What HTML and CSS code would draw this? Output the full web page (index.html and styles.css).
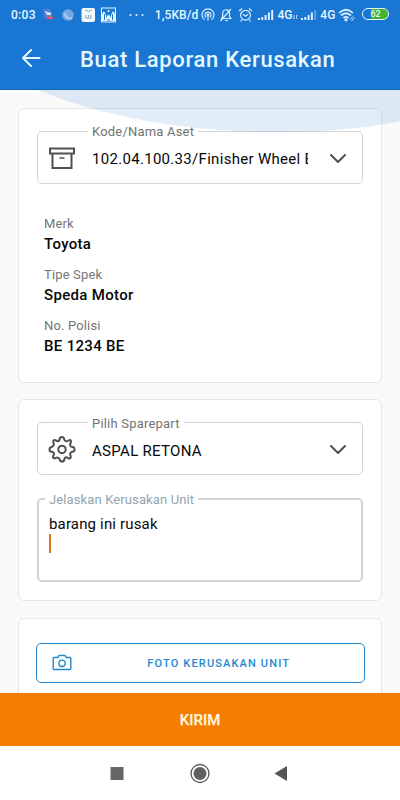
FILE: index.html
```html
<!DOCTYPE html>
<html lang="id">
<head>
<meta charset="utf-8">
<meta name="viewport" content="width=device-width, initial-scale=1">
<title>Buat Laporan Kerusakan</title>
<link rel="stylesheet" href="styles.css">
</head>
<body>
<div class="screen">
  <header class="top">
    <div class="status">
      <span class="clock">0:03</span>
      <svg class="apps" width="112" height="18" viewBox="0 0 112 18">
        <path d="M3 3h6l3 4v5H4z" fill="#527fd5"/><path d="M5 13l7-4 1 4z" fill="#e45b68"/><path d="M5 6h2v3M8 6v3l1-2 1 2V6" stroke="#fff" fill="none"/>
        <circle cx="28" cy="9" r="5.800" fill="#75a9e2"/><path d="M25 7a5 5 0 0 0 7 5" stroke="#a8c9ed" stroke-width="2" fill="none"/>
        <rect x="41.500" y="2" width="13.500" height="14" rx="2" fill="#f4fbff"/><path d="M45 4q3.500 3 7 0M46 9v3h5V9M48.500 9v2" stroke="#7ea4c4" fill="none"/>
        <rect x="61.500" y="2" width="14" height="14" fill="#1976d2" stroke="#e8f7ff"/><path d="M62 15V8l2-3 2 4v4q0-3 2.500-4.500Q71 10 71 13V9l2-4 2 3v7z" fill="#e8f7ff"/><path d="M64.500 14V8M72.500 14V8M67 14h3" stroke="#1976d2"/><circle cx="68.500" cy="5" r="1" fill="#fff"/>
        <g fill="#d9efff"><circle cx="90.500" cy="9" r="1.100"/><circle cx="96.500" cy="9" r="1.100"/><circle cx="102.500" cy="9" r="1.100"/></g>
      </svg>
      <span class="speed">1,5KB/d</span>
      <svg class="alerts" width="52" height="18" viewBox="0 0 52 18" fill="none" stroke="#d9efff" stroke-width="1.200">
        <path d="M4.500 13.700a6 6 0 1 1 7 0M6 11.300a3 3 0 1 1 4 0M8 9.500v5"/><circle cx="8" cy="9" r=".8" fill="#d9efff"/>
        <path d="M21.500 12.500h9.500l-1.500-2V7a3.500 3.500 0 0 0-6.500-1.500L22.500 11zM25 14.500h3M31 3L20.500 15"/>
        <circle cx="45.500" cy="9.200" r="4.900"/><path d="M43 8.200l2.500 2 2.500-2M39 5l3-2.500M49 2.500L52 5M42 13.500l-1.500 2M49 13.500l1.500 2"/>
      </svg>
      <svg class="bars" width="16" height="12" viewBox="0 0 16 12" fill="#d9efff"><path d="M0 9h2v2H0zM3.300 8h2v3h-2zM6.600 6h2v5h-2zM9.900 3.500h2V11h-2zM13.200 1h2v10h-2z"/></svg>
      <span class="net">4G</span>
      <svg class="arrows" width="5" height="6" viewBox="0 0 5 6" stroke="#a9d1f5" fill="none"><path d="M1 1v4M3.500 1v4M0 4l1 1M3.500 1l1 1"/></svg>
      <svg class="bars second" width="16" height="12" viewBox="0 0 16 12" fill="#d9efff"><path d="M0 9h2v2H0zM3.300 8h2v3h-2zM6.600 6h2v5h-2zM9.900 3.500h2V11h-2z"/><path d="M13.200 1h2v10h-2z" opacity=".35"/></svg>
      <span class="net">4G</span>
      <svg class="wifi" width="18" height="14" viewBox="0 0 18 14" fill="none" stroke="#d9efff" stroke-width="1.700"><path d="M1 5q7-6.500 14 0M3 7.500q5-4.500 10 0M5.500 10q2.500-2.200 5 0"/><circle cx="8" cy="11.800" r=".8" fill="#d9efff"/><path d="M12 11.500l3-3M13.500 13l3-3.500" stroke-width="1"/></svg>
      <span class="battery">62</span>
    </div>
    <div class="appbar">
      <svg width="20" height="20" viewBox="0 0 20 20" fill="none" stroke="#e5f7ff" stroke-width="2" stroke-linecap="round" stroke-linejoin="round"><path d="M18.500 9H2M10 1L2 9l8 8"/></svg>
      <h1>Buat Laporan Kerusakan</h1>
    </div>
  </header>
  <main class="content">
    <svg class="curve" width="400" height="44" viewBox="0 90 400 44"><path d="M38 90C100 116 185 132 275 132C320 132 362 129 400 121.500V90z" fill="#1976d2" fill-opacity=".13"/></svg>
    <section class="card asset">
      <div class="field">
        <span class="label">Kode/Nama Aset</span>
        <svg class="lead" width="28" height="28" viewBox="0 0 28 28" fill="none" stroke="#505050" stroke-width="2"><path d="M2 4.500h24v5H2zM4.500 10v14h19V10"/><path d="M11.500 14h5" stroke-width="1.500"/></svg>
        <span class="value code">102.04.100.33/Finisher Wheel B</span>
        <svg class="chevron" width="18" height="12" viewBox="0 0 18 12" fill="none" stroke="#505050" stroke-width="2" stroke-linecap="round" stroke-linejoin="round"><path d="M2 2l7 7 7-7"/></svg>
      </div>
      <dl class="details">
        <dt>Merk</dt><dd>Toyota</dd>
        <dt>Tipe Spek</dt><dd>Speda Motor</dd>
        <dt>No. Polisi</dt><dd>BE 1234 BE</dd>
      </dl>
    </section>
    <section class="card damage">
      <div class="field">
        <span class="label">Pilih Sparepart</span>
        <svg class="lead" width="28" height="28" viewBox="0 0 28 28" fill="none" stroke="#505050" stroke-width="2" stroke-linejoin="round"><path d="M14 2C16 2 16 3.500 16.500 5S19 6.500 20.500 5.500S23 5 23 6.500S22 8.500 22 9.500S23 12 24.500 12S26.500 13 26.500 14.400S26 16.500 24.500 16.700S21.500 18.500 22.300 20S23 23.500 21.500 23.500S19.500 22.300 18.500 22.300S16.500 23 16.300 24.500S15.500 26.500 14 26.500S12 26 11.700 24.500S9.500 22 8 22.800S5 23.500 5 22S6 20 6 19S5 16.700 3.500 16.700S1.500 15.900 1.500 14.400S2 12.300 3.500 12S6.500 10 5.700 8.500S5 5 6.500 5S8.500 6.200 9.500 6.200S11.500 5.500 11.700 4S12.500 2 14 2z"/><circle cx="14" cy="14.400" r="3.700"/></svg>
        <span class="value">ASPAL RETONA</span>
        <svg class="chevron" width="18" height="12" viewBox="0 0 18 12" fill="none" stroke="#505050" stroke-width="2" stroke-linecap="round" stroke-linejoin="round"><path d="M2 2l7 7 7-7"/></svg>
      </div>
      <div class="note">
        <span class="label">Jelaskan Kerusakan Unit</span>
        <p>barang ini rusak</p>
        <div class="caret"></div>
      </div>
    </section>
    <section class="card photo">
      <div class="photo-button">
        <svg width="20" height="18" viewBox="0 0 20 18" fill="none" stroke="#2588cf" stroke-width="1.400" stroke-linejoin="round"><path d="M2.200 3.500h3.500L7 1.500h6l1.300 2h3.500q1 0 1 1v10q0 1-1 1H2.200q-1 0-1-1v-10q0-1 1-1z"/><circle cx="10" cy="9.300" r="3.200"/></svg>
        <span>FOTO KERUSAKAN UNIT</span>
      </div>
    </section>
  </main>
  <div class="submit">KIRIM</div>
  <nav class="nav">
    <svg width="200" height="24" viewBox="0 0 200 24"><path d="M10.500 6h13v13h-13z" fill="#666"/><circle cx="100" cy="12.500" r="9" fill="none" stroke="#555" stroke-width="1.300"/><circle cx="100" cy="12.500" r="6.500" fill="#606060"/><path d="M174.500 12.500L187 5v15z" fill="#555"/></svg>
  </nav>
</div>
</body>
</html>
```
FILE: styles.css
```css
* { box-sizing: border-box; }
body { margin: 0; font-family: Roboto, sans-serif; color: #080808; background: #fafafa; }
svg { display: block; flex: none; }
.screen { width: 400px; height: 800px; display: flex; flex-direction: column; overflow: hidden; }
.top { height: 90px; flex: none; background: #1976d2; color: #e5f7ff; border-bottom: 1px solid #1268b9; }
.status { height: 29px; display: flex; align-items: center; padding: 0 11px; font-size: 12px; font-weight: 500; white-space: nowrap; }
.clock { width: 30px; letter-spacing: .3px; }
.apps { margin-left: -1px; }
.speed { width: 46px; margin-left: 3px; font-size: 12px; letter-spacing: .1px; }
.alerts { margin-left: 0; }
.bars { margin-left: 6px; }
.net { width: 16px; margin-left: 3px; font-size: 12px; }
.arrows { margin: 5px 0 0; }
.bars.second { margin-left: 3px; }
.wifi { margin-left: 2px; }
.battery { width: 27px; height: 12px; margin: -1px 0 0 6px; border: 1.5px solid #e0f4ff; border-radius: 6px; background: linear-gradient(90deg, #1976d2 30%, #42b52c 30%); font-size: 9px; line-height: 10px; text-align: center; }
.appbar { height: 60px; display: flex; align-items: center; gap: 39px; padding-left: 21px; }
h1 { margin: 2px 0 0; font-size: 22px; line-height: 28px; font-weight: 500; letter-spacing: .68px; }
.content { position: relative; flex: 1; min-height: 0; overflow: hidden; padding: 18px 18px 0; }
.curve { position: absolute; top: 0; left: 0; z-index: 1; }
.card { background: #fff; border: 1px solid #e7e7e7; border-radius: 6px; padding: 22px 18px 0; }
.asset { height: 275px; }
.damage { height: 202px; margin-top: 16px; padding-top: 22px; }
.photo { height: 100px; margin-top: 17px; padding: 24px 16.5px 0; }
.field { position: relative; height: 53px; display: flex; align-items: center; border: 1px solid #d5d5d5; border-radius: 5px; padding: 0 15px 0 10px; }
.label { position: absolute; top: -8px; left: 50px; padding: 0 4px; background: #fff; color: #737373; font-size: 13px; line-height: 17px; letter-spacing: .2px; white-space: nowrap; }
.asset .label { top: -9px; }
.value { width: 216px; margin-left: 16px; margin-top: 4px; overflow: hidden; white-space: nowrap; font-size: 15px; line-height: 20px; letter-spacing: .3px; }
.asset .value { margin-top: 3px; letter-spacing: .3px; }
.chevron { margin-left: auto; margin-top: 2px; }
.details { margin: 31px 0 0 7px; }
.details dt { color: #757575; font-size: 13px; line-height: 18px; letter-spacing: .15px; }
.details dd { margin: 0 0 11px; font-size: 15px; line-height: 22px; font-weight: 500; letter-spacing: .32px; }
.note { position: relative; height: 84px; margin-top: 23px; padding: 14px 10px; border: 2px solid #cfd4d6; border-radius: 5px; }
.note .label { top: -9px; left: 6px; color: #90a4ae; letter-spacing: .12px; }
.note p { margin: 0; font-size: 15px; line-height: 20px; letter-spacing: .16px; }
.caret { width: 2px; height: 19px; background: #d17820; }
.photo-button { height: 40px; display: flex; align-items: center; border: 1px solid #2588cf; border-radius: 5px; padding-left: 15.5px; }
.photo-button span { flex: 1; margin: 0 0 0 2px; text-align: center; color: #2588cf; font-size: 11px; font-weight: 500; letter-spacing: 1.15px; }
.submit { height: 53px; flex: none; background: #f77d00; color: #fff4de; text-align: center; font-size: 15px; line-height: 54px; font-weight: 500; -webkit-text-stroke: .25px #fff4de; }
.nav { height: 54px; flex: none; background: #fff; display: flex; justify-content: center; padding-top: 15px; }
```
